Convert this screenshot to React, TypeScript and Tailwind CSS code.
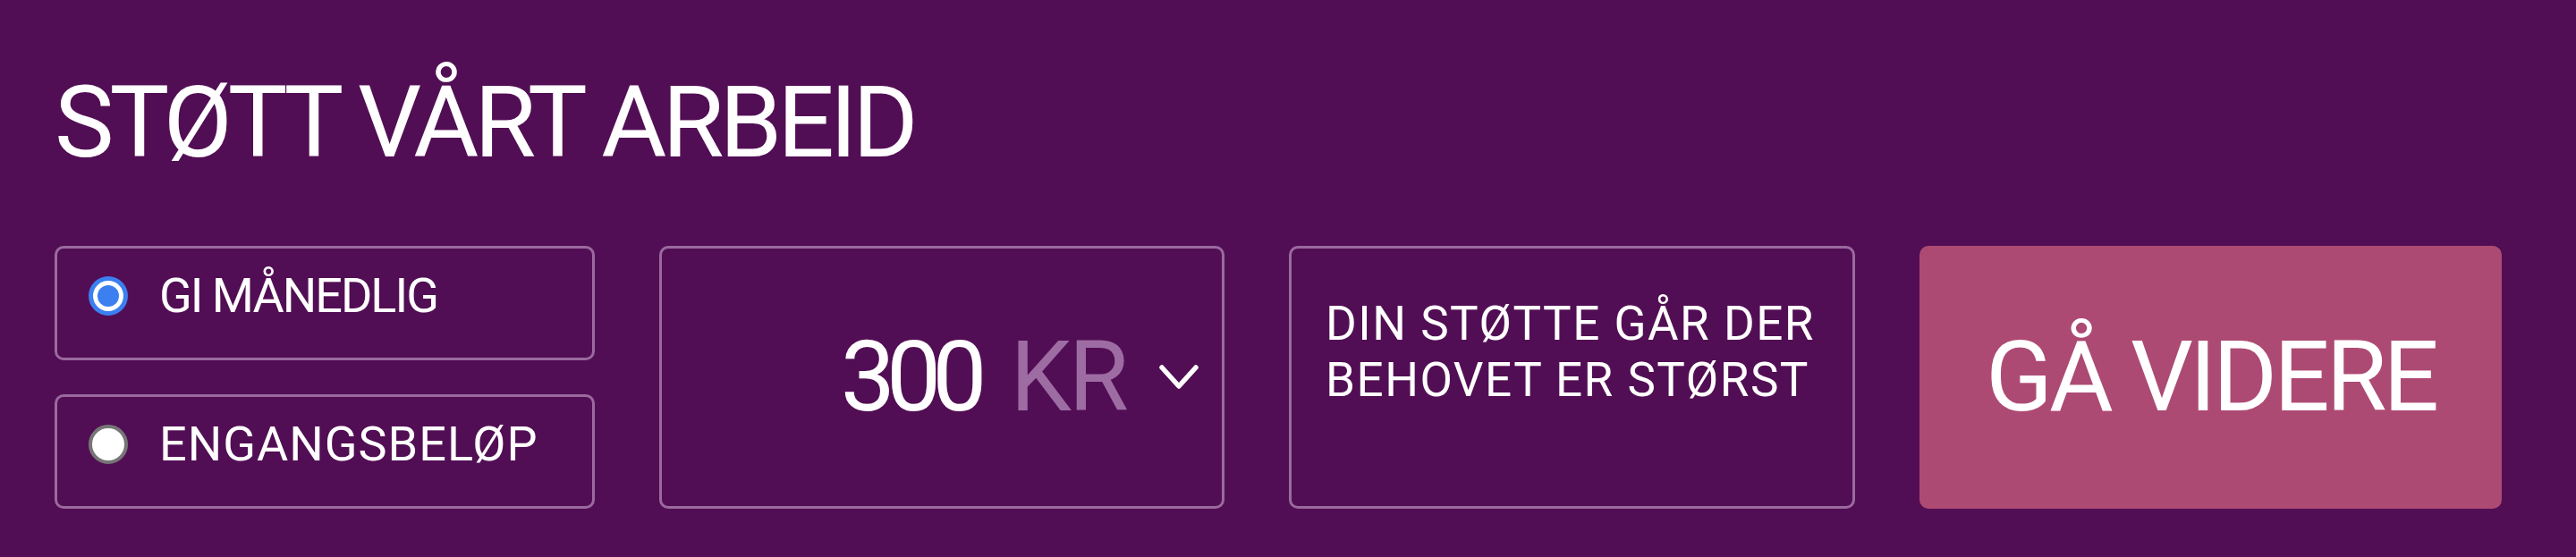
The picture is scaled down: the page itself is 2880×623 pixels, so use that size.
import { useState } from 'react'

type Frequency = 'monthly' | 'once'

const OPTIONS: { id: Frequency; label: string }[] = [
  { id: 'monthly', label: 'GI MÅNEDLIG' },
  { id: 'once', label: 'ENGANGSBELØP' },
]

function Radio({ checked }: { checked: boolean }) {
  if (checked) {
    return (
      <span className="flex h-[44px] w-[44px] shrink-0 items-center justify-center rounded-full bg-[#3b7ff0]">
        <span className="flex h-[34px] w-[34px] items-center justify-center rounded-full bg-white">
          <span className="h-[24px] w-[24px] rounded-full bg-[#3b7ff0]" />
        </span>
      </span>
    )
  }
  return <span className="h-[44px] w-[44px] shrink-0 rounded-full border-[4px] border-[#767676] bg-white" />
}

export default function App() {
  const [frequency, setFrequency] = useState<Frequency>('monthly')

  return (
    <div className="h-[623px] w-full bg-[#520e54] pl-[61px] pr-[83px] pt-[79px] text-white [font-family:Roboto,'Liberation_Sans',sans-serif]">
      <h1 className="text-[112px] leading-[115px] font-normal tracking-[-5px]">STØTT VÅRT ARBEID</h1>

      <div className="mt-[81px] flex h-[294px] gap-[72px]">
        <div className="flex w-[604px] flex-col gap-[38px]">
          {OPTIONS.map((opt) => (
            <button
              key={opt.id}
              type="button"
              onClick={() => setFrequency(opt.id)}
              className="flex flex-1 items-center gap-[35px] rounded-[10px] border-[3px] border-[#9a6a9f] pb-[16px] pl-[35px] text-left text-[54px] leading-none"
            >
              <Radio checked={frequency === opt.id} />
              <span className={opt.id === 'monthly' ? 'tracking-[-2px]' : 'tracking-[1px]'}>{opt.label}</span>
            </button>
          ))}
        </div>

        <div className="flex w-[632px] items-center justify-end rounded-[10px] border-[3px] border-[#9a6a9f] pr-[25px]">
          <span className="text-[109px] leading-none tracking-[-10px]">300</span>
          <span className="ml-[36px] text-[109px] leading-none tracking-[-3px] text-[#9d6ca3]">KR</span>
          <svg className="ml-[36px]" width="46" height="30" viewBox="0 0 46 30" fill="none">
            <path d="M4 4 L23 25 L42 4" stroke="white" strokeWidth="5.5" strokeLinecap="round" strokeLinejoin="round" />
          </svg>
        </div>

        <div className="w-[633px] rounded-[10px] border-[3px] border-[#9a6a9f] pl-[38px] pt-[53px] text-[53px] leading-[63px] tracking-[1.5px]">
          DIN STØTTE GÅR DER
          <br />
          BEHOVET ER STØRST
        </div>

        <button
          type="button"
          className="flex w-[651px] items-center justify-center rounded-[10px] bg-[#ad4a73] text-[110px] leading-none tracking-[-4px]"
        >
          GÅ VIDERE
        </button>
      </div>
    </div>
  )
}
